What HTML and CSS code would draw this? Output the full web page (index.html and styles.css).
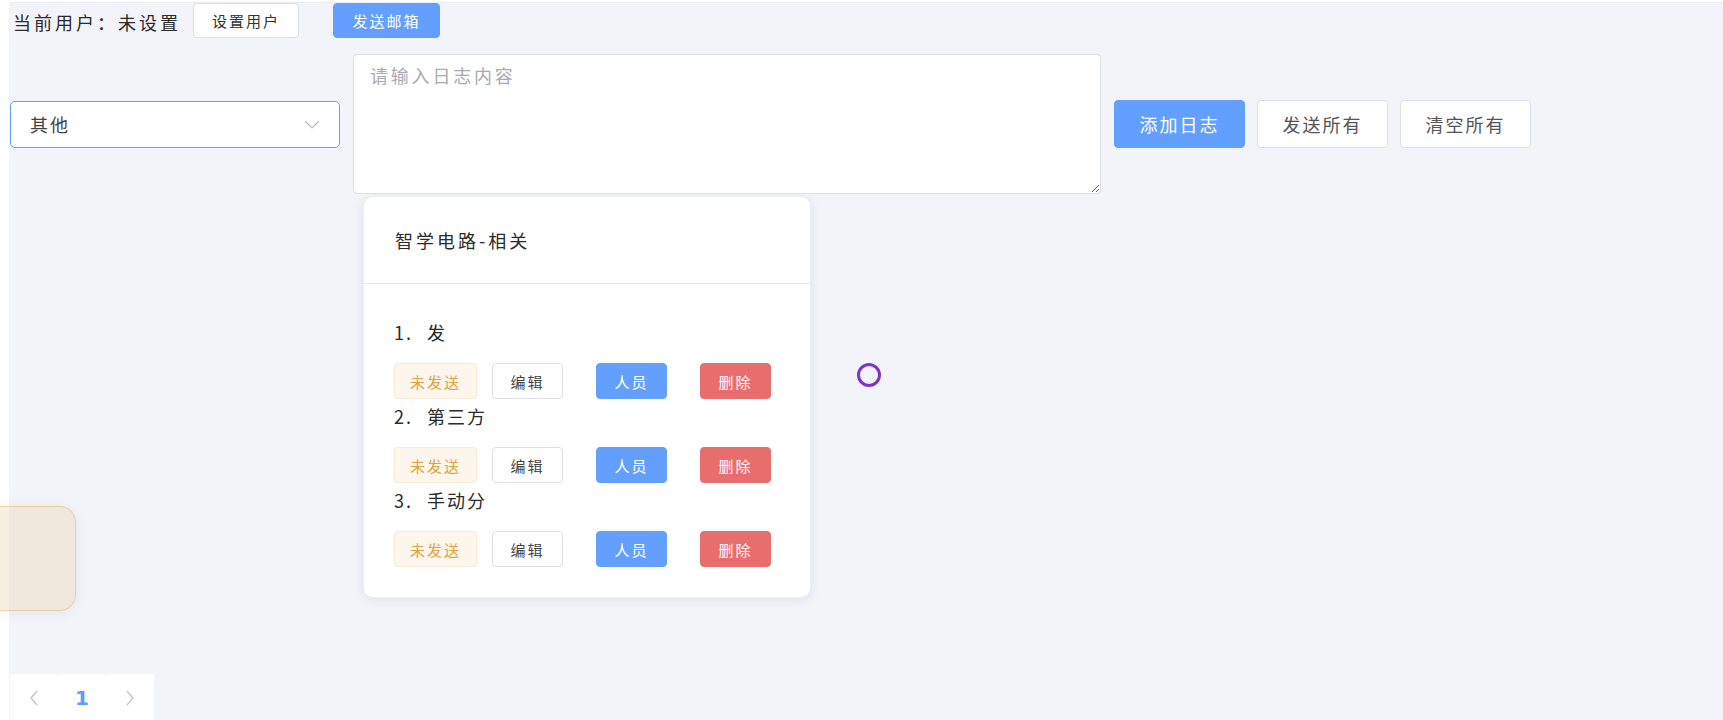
FILE: index.html
```html
<!DOCTYPE html>
<html lang="zh">
<head>
  <meta charset="UTF-8">
  <title>日志记录</title>
  <link rel="stylesheet" href="styles.css">
</head>
<body>

<div class="page">
  <div class="topbar">
    <span class="user-label">当前用户：未设置</span>
    <button class="btn btn-small">设置用户</button>
    <button class="btn btn-small btn-blue mail-btn">发送邮箱</button>
  </div>

  <!-- editor row -->
  <div class="editor">
    <div class="select">
      <span>其他</span>
      <svg class="select-arrow" width="16" height="10" viewBox="0 0 16 10">
        <polyline points="1,1 8,8 15,1" fill="none" stroke="#b4b7be" stroke-width="1.2"/>
      </svg>
    </div>
    <textarea class="log-input" placeholder="请输入日志内容"></textarea>
    <button class="btn btn-large btn-blue">添加日志</button>
    <button class="btn btn-large">发送所有</button>
    <button class="btn btn-large">清空所有</button>
  </div>

  <div class="card">
    <div class="card-header">智学电路-相关</div>
    <div class="card-body">
      <div class="log-item">
        <div class="log-text"><span class="num">1.</span>发</div>
        <div class="log-actions">
          <span class="tag">未发送</span>
          <button class="btn btn-mini edit-btn">编辑</button>
          <button class="btn btn-mini btn-blue">人员</button>
          <button class="btn btn-mini btn-red">删除</button>
        </div>
      </div>
      <div class="log-item">
        <div class="log-text"><span class="num">2.</span>第三方</div>
        <div class="log-actions">
          <span class="tag">未发送</span>
          <button class="btn btn-mini edit-btn">编辑</button>
          <button class="btn btn-mini btn-blue">人员</button>
          <button class="btn btn-mini btn-red">删除</button>
        </div>
      </div>
      <div class="log-item">
        <div class="log-text"><span class="num">3.</span>手动分</div>
        <div class="log-actions">
          <span class="tag">未发送</span>
          <button class="btn btn-mini edit-btn">编辑</button>
          <button class="btn btn-mini btn-blue">人员</button>
          <button class="btn btn-mini btn-red">删除</button>
        </div>
      </div>
    </div>
  </div>

  <div class="pager">
    <div class="pager-cell">
      <svg width="10" height="16" viewBox="0 0 10 16"><polyline points="8,1 2,8 8,15" fill="none" stroke="#c0c4cc" stroke-width="1.3"/></svg>
    </div>
    <div class="pager-cell pager-num">1</div>
    <div class="pager-cell">
      <svg width="10" height="16" viewBox="0 0 10 16"><polyline points="2,1 8,8 2,15" fill="none" stroke="#c0c4cc" stroke-width="1.3"/></svg>
    </div>
  </div>
</div>

<div class="cursor-ring"></div>
<div class="float-panel"></div>

</body>
</html>
```

FILE: styles.css
```css
html, body {
  margin: 0;
  padding: 0;
  background: #fff;
}
body {
  font-family: "Noto Sans CJK SC", "Noto Sans", sans-serif;
  color: #333;
  letter-spacing: 2px;
  overflow: hidden;
}
.page {
  margin: 2px 0 0 9px;
  border-top: 1px solid #ecedf2;
  background: #f3f4f9;
  min-height: 717px;
}
.topbar {
  display: flex;
  align-items: center;
  padding-left: 4px;
  height: 35px;
}
.user-label {
  font-size: 18px;
  letter-spacing: 3px;
  width: 166px;
  margin-right: 14px;
  white-space: nowrap;
  padding-top: 2px;
  color: #2b2b2b;
}
.btn {
  font-family: inherit;
  letter-spacing: 2px;
  border: 1px solid #dcdfe6;
  background: #fff;
  color: #555;
  border-radius: 4px;
  padding: 0;
  box-sizing: border-box;
  cursor: pointer;
}
.btn-blue {
  background: #639ffe;
  border-color: #639ffe;
  color: #fff;
}
.btn-red {
  background: #e86e6e;
  border-color: #e86e6e;
  color: #fff;
}
.btn-small {
  width: 106px;
  height: 35px;
  font-size: 15px;
  color: #333;
}
.btn-small.btn-blue {
  color: #fff;
}
.mail-btn {
  width: 107px;
  margin-left: 34px;
}
.editor {
  display: flex;
  align-items: center;
  gap: 13px;
  margin-top: 16px;
  padding-left: 1px;
}
.select {
  width: 330px;
  height: 47px;
  box-sizing: border-box;
  border: 1px solid #639ffe;
  border-radius: 5px;
  background: #fff;
  display: flex;
  align-items: center;
  justify-content: space-between;
  padding: 0 19px 0 19px;
  font-size: 18px;
  color: #444;
}
.select-arrow {
  margin-top: 2px;
}
.log-input {
  width: 748px;
  height: 140px;
  box-sizing: border-box;
  border: 1px solid #dcdfe6;
  border-radius: 4px;
  padding: 7px 16px;
  font-family: inherit;
  font-size: 18px;
  line-height: 26px;
  letter-spacing: 2.8px;
  color: #333;
  background: #fff;
}
.log-input::placeholder {
  color: #a8abb2;
}
.btn-large {
  width: 131px;
  height: 48px;
  font-size: 18px;
}
.editor .btn-large + .btn-large {
  margin-left: -1px;
}
.card {
  margin: 2px 0 0 354px;
  width: 448px;
  box-sizing: border-box;
  background: #fff;
  border: 1px solid #ebeef5;
  border-radius: 10px;
  box-shadow: 0 2px 12px rgba(0, 0, 0, 0.08);
}
.card-header {
  height: 86px;
  display: flex;
  align-items: center;
  padding: 0 30px 0 31px;
  border-bottom: 1px solid #e4e7ed;
  font-size: 18px;
  letter-spacing: 3px;
  color: #2b2b2b;
}
.card-body {
  padding: 36px 30px 30px 30px;
}
.log-item {
  margin-bottom: 5px;
}
.log-item:last-child {
  margin-bottom: 0;
}
.log-text {
  font-size: 18px;
  line-height: 24px;
  color: #2b2b2b;
}
.num {
  display: inline-block;
  width: 33px;
}
.log-actions {
  display: flex;
  align-items: center;
  margin-top: 19px;
  height: 36px;
}
.tag {
  width: 83px;
  height: 36px;
  box-sizing: border-box;
  display: flex;
  align-items: center;
  justify-content: center;
  background: #fdf6ec;
  border: 1px solid #f8ead5;
  border-radius: 4px;
  color: #e0a23f;
  font-size: 15px;
}
.btn-mini {
  width: 71px;
  height: 36px;
  font-size: 15px;
  margin-left: 33px;
}
.edit-btn {
  margin-left: 15px;
  color: #444;
}
.pager {
  display: flex;
  margin: 76px 0 0 1px;
}
.pager-cell {
  width: 48px;
  height: 48px;
  background: #fff;
  border-radius: 3px;
  display: flex;
  align-items: center;
  justify-content: center;
}
.pager-num {
  font-family: "DejaVu Sans", sans-serif;
  font-weight: bold;
  font-size: 20px;
  color: #5c9cff;
  letter-spacing: 0;
}
.cursor-ring {
  position: absolute;
  left: 857px;
  top: 363px;
  width: 24px;
  height: 24px;
  box-sizing: border-box;
  border: 3px solid #7f35c9;
  border-radius: 50%;
}
.float-panel {
  position: fixed;
  left: -40px;
  top: 506px;
  width: 116px;
  height: 105px;
  box-sizing: border-box;
  border-radius: 16px;
  background: rgba(235, 215, 180, 0.4);
  border: 1px solid rgba(225, 185, 120, 0.55);
  box-shadow: 0 2px 14px rgba(0, 0, 0, 0.06);
}
```
